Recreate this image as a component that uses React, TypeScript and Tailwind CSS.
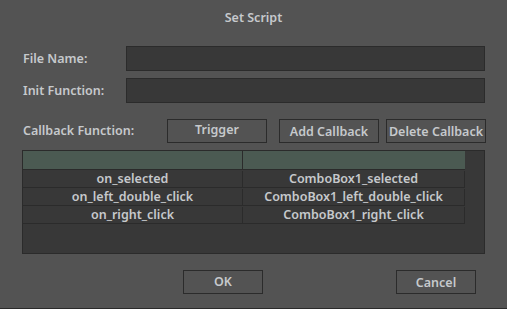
import React from "react";

const rows = [
  ["on_selected", "ComboBox1_selected"],
  ["on_left_double_click", "ComboBox1_left_double_click"],
  ["on_right_click", "ComboBox1_right_click"],
];

function Btn({ children, className = "" }: { children: React.ReactNode; className?: string }) {
  return (
    <button
      type="button"
      className={`h-[24px] w-[100px] border border-[#2b2b2b] bg-[#535353] text-[12.5px] font-semibold text-[#c6c9cc] ${className}`}
    >
      {children}
    </button>
  );
}

export default function App() {
  return (
    <div
      className="flex h-[309px] w-[507px] flex-col border-b border-[#2a2a2a] bg-[#535353] text-[#c6c9cc]"
      style={{ fontFamily: '"Noto Sans", "Open Sans", sans-serif' }}
    >
      <div className="pt-[7px] text-center text-[12.5px] font-semibold leading-[22px]">Set Script</div>

      <div className="mt-[17px] flex items-center pl-[23px] pr-[22px]">
        <span className="w-[103px] pt-[2px] text-[12.5px] font-semibold">File Name:</span>
        <div className="h-[25px] flex-1 border border-[#2b2b2b] bg-[#383838]" />
      </div>
      <div className="mt-[7px] flex items-center pl-[23px] pr-[22px]">
        <span className="w-[103px] pt-[2px] text-[12.5px] font-semibold">Init Function:</span>
        <div className="h-[25px] flex-1 border border-[#2b2b2b] bg-[#383838]" />
      </div>

      <div className="mt-[16px] flex items-center pl-[23px] pr-[21px]">
        <span className="w-[144px] pt-[1px] text-[12.5px] font-semibold">Callback Function:</span>
        <Btn className="pb-[1px]">Trigger</Btn>
        <Btn className="ml-[12px] pt-[2px]">Add Callback</Btn>
        <Btn className="ml-[7px] pt-[2px]">Delete Callback</Btn>
      </div>

      <div className="ml-[22px] mr-[22px] mt-[7px] h-[104px] border border-[#2b2b2b] bg-[#383838]">
        <div className="w-[442px]">
          <div className="grid h-[19px] grid-cols-[220px_1fr] border-b border-[#2b2b2b] bg-[#4b5a52]">
            <div className="border-r border-[#2b2b2b]" />
            <div />
          </div>
          {rows.map(([a, b]) => (
            <div
              key={a}
              className="grid h-[18px] grid-cols-[220px_1fr] border-b border-[#2b2b2b] pt-[1px] text-[12.5px] font-semibold leading-[16px]"
            >
              <div className="border-r border-[#2b2b2b] text-center">{a}</div>
              <div className="border-r border-[#2b2b2b] text-center">{b}</div>
            </div>
          ))}
        </div>
      </div>

      <div className="mt-[16px] flex">
        <button
          type="button"
          className="ml-[183px] h-[24px] w-[80px] border border-[#2b2b2b] bg-[#535353] text-[12.5px] font-semibold text-[#c6c9cc]"
        >
          OK
        </button>
        <button
          type="button"
          className="ml-[133px] h-[24px] w-[80px] border border-[#2b2b2b] bg-[#535353] pt-[2px] text-[12.5px] font-semibold text-[#c6c9cc]"
        >
          Cancel
        </button>
      </div>
    </div>
  );
}
